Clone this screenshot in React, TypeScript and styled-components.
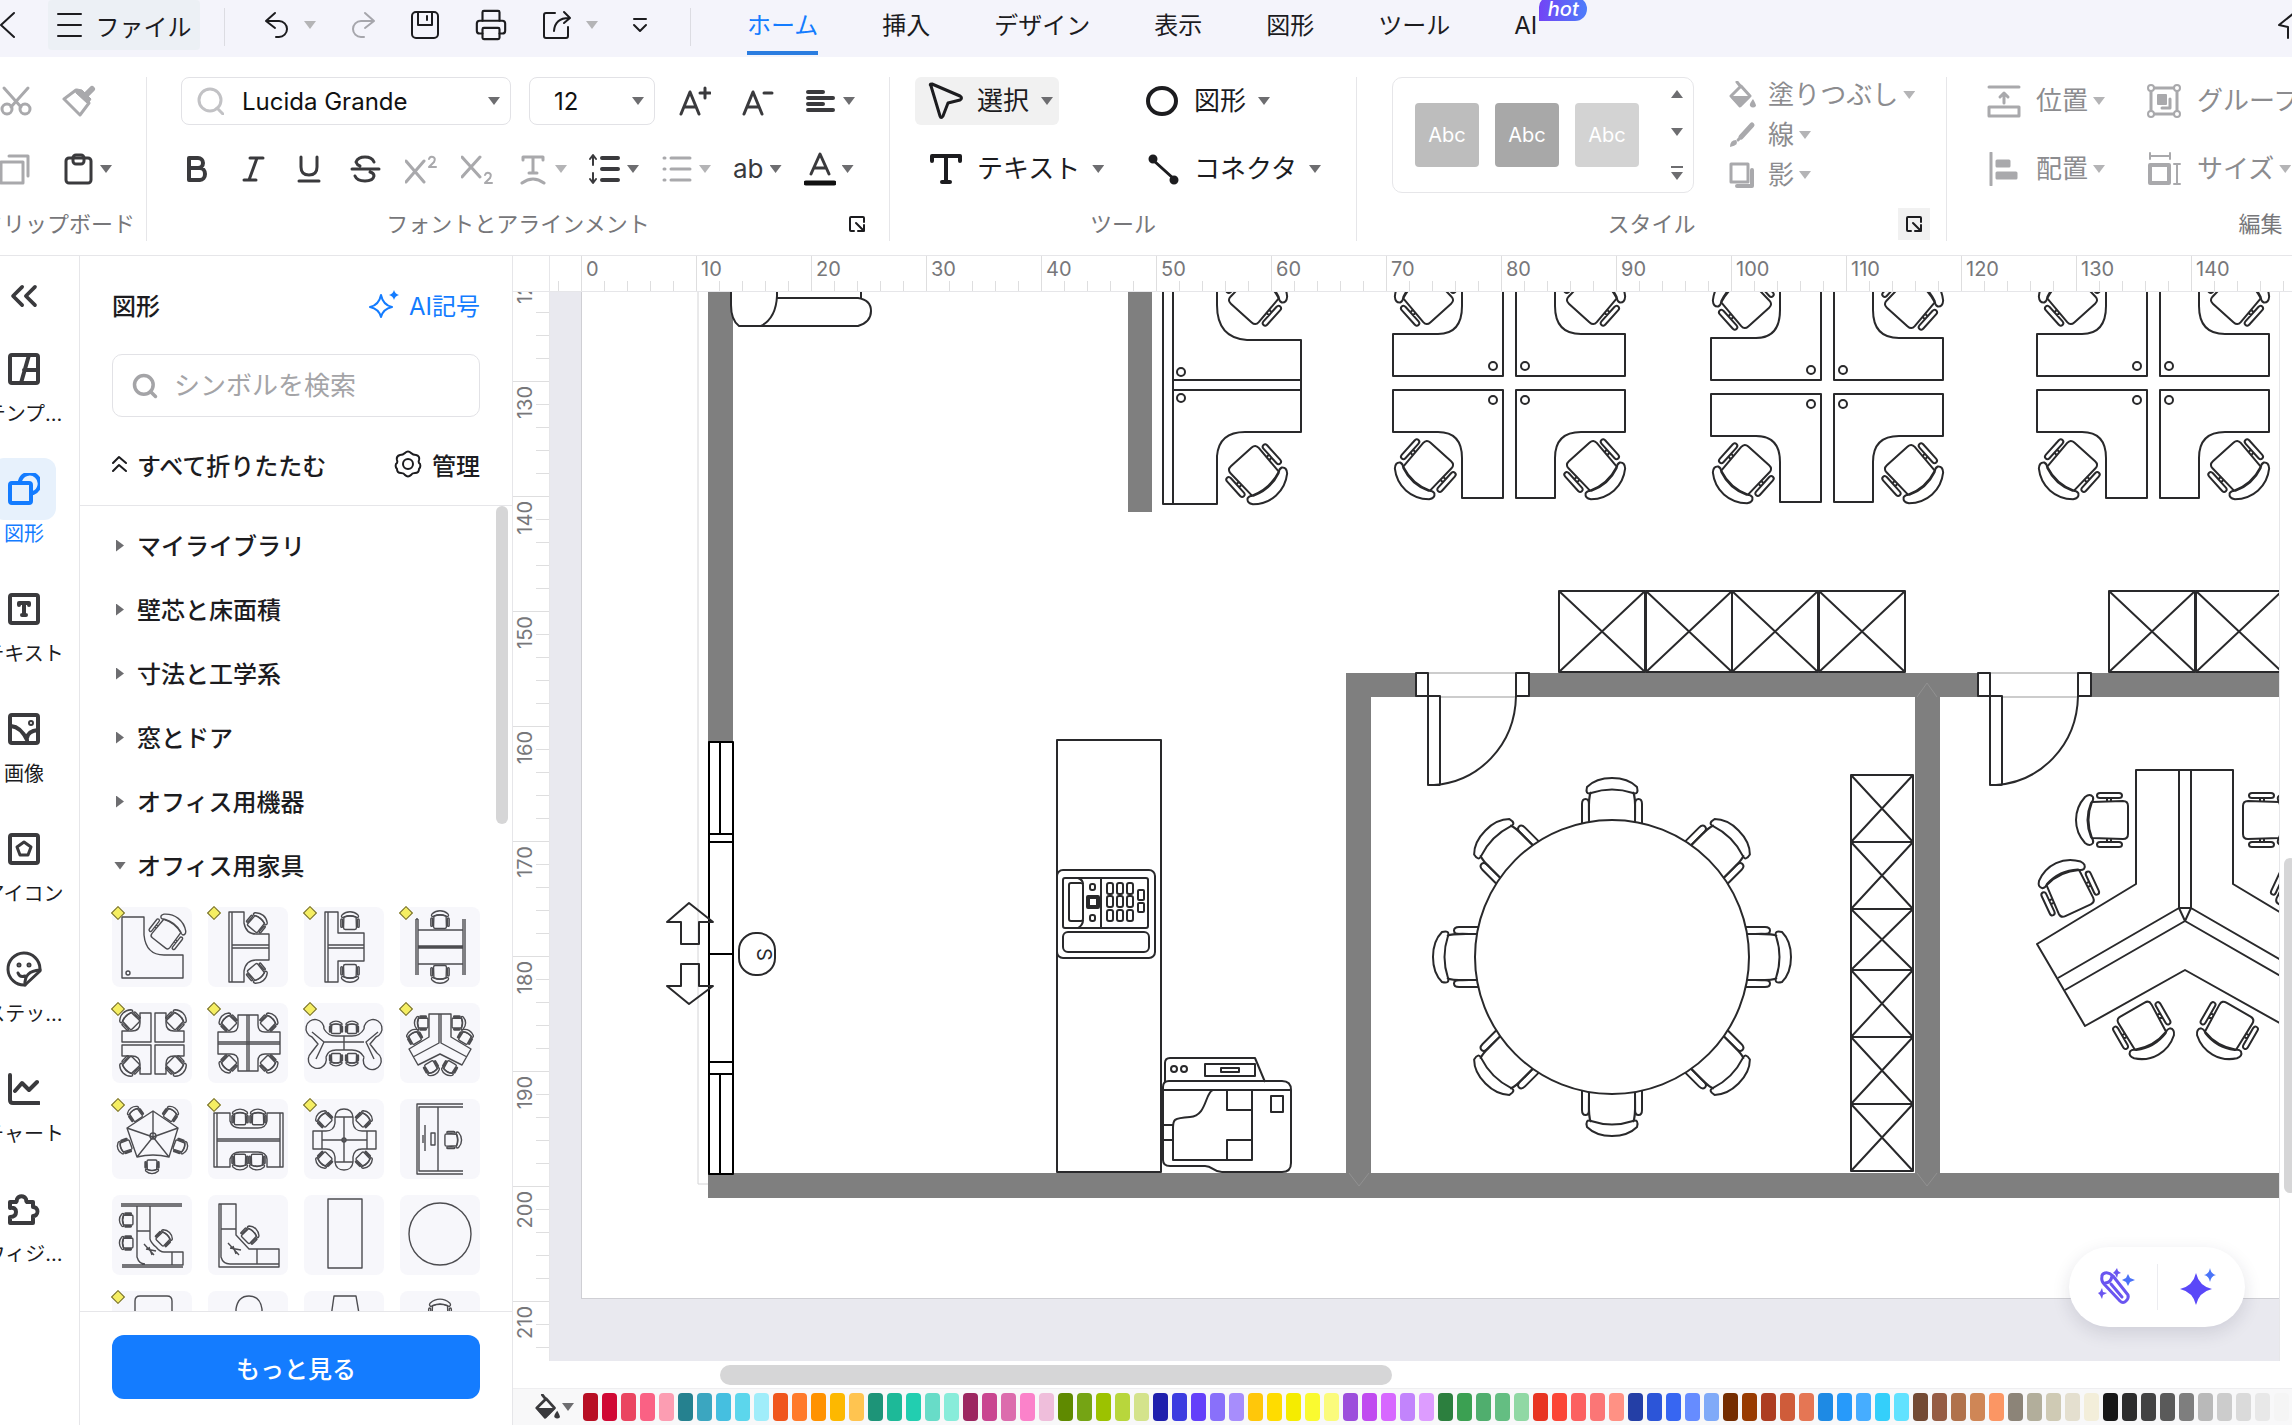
import React from 'react';
import styled, { createGlobalStyle, css } from 'styled-components';
import { Printer, Search, ChevronsLeft } from 'lucide-react';

const GlobalStyle = createGlobalStyle`
  *, *::before, *::after { box-sizing: border-box; }
  html, body { margin: 0; overflow: hidden; }
  body, button, input, select {
    font-family: Inter, "Noto Sans CJK JP", sans-serif;
    font-size: 24px;
    color: #1c1c1f;
  }
  button { border: 0; padding: 0; background: none; cursor: pointer; }
  svg { display: block; flex: none; }
`;

const line = '#e6e6e9';
const blue = '#147cff';
const dark = '#3a3a3d';
const muted = '#a9a9ac';

/* ---------- shell ---------- */

const Shell = styled.div`
  display: flex;
  flex-direction: column;
  height: 100vh;
  overflow: hidden;
  background: #fff;
`;

const Main = styled.main`
  display: flex;
  flex: 1;
  min-height: 0;
`;

const Caret = styled.span<{ $dim?: boolean; $dir?: 'up' | 'down' | 'right' }>`
  flex: none;
  width: 12px;
  height: 8px;
  background: ${p => (p.$dim ? '#b4b4b6' : '#6d6d70')};
  clip-path: polygon(0 0, 100% 0, 50% 100%);
  ${p => p.$dir === 'up' && css`clip-path: polygon(50% 0, 100% 100%, 0 100%);`}
  ${p => p.$dir === 'right' && css`width: 8px; height: 12px; clip-path: polygon(0 0, 100% 50%, 0 100%);`}
`;

type IconProps = { w?: number; h?: number; vb?: string; sw?: number; color?: string; children: React.ReactNode };
const Icon = ({ w = 32, h = 32, vb, sw = 3, color = 'currentColor', children }: IconProps) => (
  <svg width={w} height={h} viewBox={vb || `0 0 ${w} ${h}`} fill="none" stroke={color} strokeWidth={sw}
    strokeLinecap="round" strokeLinejoin="round" aria-hidden="true">{children}</svg>
);

/* ---------- title bar ---------- */

const TitleBar = styled.header`
  display: flex;
  align-items: flex-start;
  flex: none;
  height: 57px;
  background: #f4f4fb;
  overflow: hidden;
`;

const BarButton = styled.button<{ $dim?: boolean }>`
  display: flex;
  align-items: center;
  justify-content: center;
  gap: 14px;
  height: 50px;
  color: ${p => (p.$dim ? '#a6a6ac' : '#1c1c1f')};
`;

const BackButton = styled(BarButton)`
  width: 16px;
  margin-right: 32px;
`;

const FileButton = styled(BarButton)`
  width: 152px;
  margin-right: 24px;
  border-radius: 4px;
  background: #ecf0f5;
`;

const Divider = styled.span`
  flex: none;
  width: 1px;
  height: 38px;
  margin: 8px 0;
  background: #dcdce2;
`;

const QuickTools = styled.div`
  display: flex;
  gap: 34px;
  padding: 0 42px 0 39px;
`;

const Tabs = styled.nav`
  display: flex;
  gap: 64px;
  padding-left: 56px;
`;

const Tab = styled.a<{ $active?: boolean }>`
  position: relative;
  height: 55px;
  line-height: 51px;
  text-decoration: none;
  white-space: nowrap;
  color: ${p => (p.$active ? blue : '#1c1c1f')};
  border-bottom: 4px solid ${p => (p.$active ? '#2b7de0' : 'transparent')};
`;

const HotBadge = styled.span`
  position: absolute;
  left: 25px;
  top: -3px;
  width: 48px;
  height: 24px;
  line-height: 24px;
  text-align: center;
  font-size: 20px;
  font-style: italic;
  font-weight: 500;
  color: #fff;
  border-radius: 10px 12px 12px 0;
  background: linear-gradient(90deg, #7344f5, #4d7dfa);
`;

const ShareButton = styled(BarButton)`
  margin-left: auto;
  margin-right: -18px;
`;

/* ---------- ribbon ---------- */

const Ribbon = styled.section`
  display: flex;
  flex: none;
  height: 199px;
  padding-top: 20px;
  border-bottom: 1px solid ${line};
  overflow: hidden;
`;

const Group = styled.div<{ $width: number }>`
  flex: none;
  display: grid;
  grid-template-columns: minmax(0, 1fr);
  grid-template-rows: 116px 32px;
  row-gap: 15px;
  width: ${p => p.$width}px;
  height: 164px;
  border-right: 1px solid ${line};
`;

const GroupBody = styled.div<{ $pad: number }>`
  display: flex;
  padding-left: ${p => p.$pad}px;
`;

const GroupFooter = styled.div`
  display: grid;
  grid-template-columns: 1fr auto 1fr;
  align-items: center;
  padding: 0 16px;
  font-size: 22px;
  line-height: 32px;
  white-space: nowrap;
  color: #77777a;
`;

const ClipFooter = styled(GroupFooter)`
  display: flex;
  justify-content: flex-end;
  padding: 0 11px;
`;

const Launcher = styled.button<{ $hover?: boolean }>`
  grid-column: 3;
  justify-self: end;
  display: grid;
  place-items: center;
  width: 32px;
  height: 32px;
  color: #1c1c1f;
  background: ${p => (p.$hover ? '#f1f1f1' : 'none')};
`;

const Rows = styled.div`
  display: grid;
  grid-template-rows: 48px 48px;
  row-gap: 20px;
`;

const Row = styled.div<{ $gap: number }>`
  display: flex;
  align-items: center;
  gap: ${p => p.$gap}px;
`;

const ToolButton = styled.button<{ $dim?: boolean; $gap?: number }>`
  display: flex;
  align-items: center;
  gap: ${p => p.$gap ?? 6}px;
  font-size: 26px;
  line-height: 36px;
  white-space: nowrap;
  color: ${p => (p.$dim ? muted : dark)};
`;

const Field = styled.label<{ $width: number }>`
  display: flex;
  align-items: center;
  width: ${p => p.$width}px;
  height: 48px;
  padding: 0 10px 0 14px;
  border: 1px solid #e2e2e6;
  border-radius: 8px;
  color: #c2c2c5;
`;

const Select = styled.select`
  flex: 1;
  min-width: 0;
  padding: 0 0 0 18px;
  border: 0;
  outline: 0;
  background: none;
  appearance: none;
  color: #111;
`;

const SizeSelect = styled(Select)`
  padding-left: 10px;
`;

const ToolGrid = styled.div`
  display: grid;
  grid-template-columns: 217px auto;
  grid-template-rows: 48px 48px;
  row-gap: 20px;
  justify-items: start;
`;

const BigTool = styled(ToolButton)<{ $active?: boolean }>`
  gap: 12px;
  height: 48px;
  padding: 0 6px 0 12px;
  border-radius: 6px;
  color: #1c1c1f;
  background: ${p => (p.$active ? '#f1f1f1' : 'none')};
`;

const Gallery = styled.div`
  display: flex;
  align-items: center;
  justify-content: space-between;
  width: 302px;
  height: 116px;
  padding: 0 10px 0 22px;
  border: 1px solid ${line};
  border-radius: 10px;
`;

const Swatches = styled.div`
  display: flex;
  gap: 16px;
`;

const StyleSwatch = styled.button<{ $fill: string }>`
  width: 64px;
  height: 64px;
  border-radius: 4px;
  font-size: 20px;
  color: #fff;
  background: ${p => p.$fill};
`;

const Steppers = styled.div`
  display: flex;
  flex-direction: column;
  justify-content: space-between;
  height: 90px;
  button { display: grid; justify-items: center; row-gap: 4px; }
`;

const Rule = styled.span`
  width: 12px;
  height: 2px;
  background: #6d6d70;
`;

const StyleList = styled.div`
  display: flex;
  flex-direction: column;
  justify-content: space-between;
  margin-left: 34px;
`;

const StyleItem = styled(ToolButton)`
  gap: 5px;
  color: #8c8c8f;
  svg { margin-right: 7px; color: ${muted}; }
`;

const EditGrid = styled.div`
  display: grid;
  grid-template-columns: 159px auto;
  grid-template-rows: 48px 48px;
  row-gap: 20px;
`;

const EditItem = styled(StyleItem)`
  svg { margin-right: 10px; }
`;

/* ---------- left rail ---------- */

const Rail = styled.nav`
  flex: none;
  width: 80px;
  border-right: 1px solid ${line};
  overflow: hidden;
`;

const RailInner = styled.div`
  display: flex;
  flex-direction: column;
  align-items: center;
  gap: 30px;
  width: 112px;
  margin-left: -32px;
  padding-top: 16px;
`;

const CollapseButton = styled.button`
  display: grid;
  place-items: center;
  height: 48px;
  margin-bottom: -12px;
  color: ${dark};
`;

const RailItem = styled.button<{ $active?: boolean }>`
  display: flex;
  flex-direction: column;
  align-items: center;
  width: 112px;
  font-size: 20px;
  line-height: 28px;
  white-space: nowrap;
  color: ${p => (p.$active ? blue : '#1c1c1f')};
`;

const RailIcon = styled.span<{ $active?: boolean }>`
  display: grid;
  place-items: center;
  width: 64px;
  height: 62px;
  border-radius: 12px;
  color: ${p => (p.$active ? blue : dark)};
  background: ${p => (p.$active ? '#e7f1fc' : 'none')};
`;

/* ---------- symbol panel ---------- */

const Panel = styled.aside`
  display: flex;
  flex-direction: column;
  flex: none;
  width: 433px;
  border-right: 1px solid ${line};
`;

const PanelTop = styled.div`
  padding: 24px 32px 17px;
  border-bottom: 1px solid ${line};
`;

const PanelRow = styled.div`
  display: flex;
  align-items: center;
  justify-content: space-between;
  height: 48px;
`;

const Heading = styled.h2`
  margin: 0;
  font-size: 24px;
  font-weight: 500;
`;

const PanelLink = styled.button<{ $blue?: boolean }>`
  display: flex;
  align-items: center;
  gap: 10px;
  font-weight: ${p => (p.$blue ? 400 : 500)};
  color: ${p => (p.$blue ? blue : '#1c1c1f')};
`;

const SearchBox = styled.label`
  display: flex;
  align-items: center;
  gap: 15px;
  height: 63px;
  margin: 26px 0 23px;
  padding: 0 18px;
  border: 1px solid #e2e2e6;
  border-radius: 10px;
  color: #a4a4a7;
`;

const SearchInput = styled.input`
  flex: 1;
  min-width: 0;
  border: 0;
  outline: 0;
  padding: 0;
  background: none;
  font-size: 26px;
  &::placeholder { color: #a4a4a7; opacity: 1; }
`;

const Scroller = styled.div`
  display: flex;
  flex: 1;
  min-height: 0;
`;

const Library = styled.div`
  flex: 1;
  padding: 6px 0 0 32px;
  overflow: hidden;
`;

const SectionButton = styled.button`
  display: flex;
  align-items: center;
  width: 100%;
  height: 64px;
  font-weight: 500;
`;

const Marker = styled.span`
  display: grid;
  justify-items: center;
  width: 16px;
  margin-right: 9px;
  padding-top: 3px;
`;

const Track = styled.div`
  flex: none;
  width: 16px;
`;

const Thumb = styled.div<{ $w: string; $h: number; $x?: number; $y?: number }>`
  width: ${p => p.$w};
  height: ${p => p.$h}px;
  margin: ${p => p.$y ?? 0}px 0 0 ${p => p.$x ?? 0}px;
  border-radius: 10px;
  background: #d6d6d7;
`;

const Tiles = styled.div`
  display: grid;
  grid-template-columns: repeat(4, 80px);
  grid-auto-rows: 80px;
  gap: 16px;
  padding-top: 11px;
`;

const Tile = styled.button`
  position: relative;
  width: 80px;
  height: 80px;
  border-radius: 8px;
  background: #f7f7fb;
`;

const Gem = styled.span`
  position: absolute;
  left: 1px;
  top: 1px;
  width: 10px;
  height: 10px;
  border: 1px solid #6b6433;
  background: #f5ee62;
  transform: rotate(45deg);
`;

const PanelFooter = styled.div`
  flex: none;
  height: 114px;
  padding: 23px 32px 0;
  border-top: 1px solid ${line};
`;

const MoreButton = styled.button`
  width: 100%;
  height: 64px;
  border-radius: 12px;
  font-weight: 500;
  color: #fff;
  background: ${blue};
`;

/* ---------- canvas ---------- */

const Workspace = styled.section`
  display: flex;
  flex-direction: column;
  flex: 1;
  min-width: 0;
`;

const RulerTop = styled.div`
  display: flex;
  flex: none;
  height: 36px;
  border-bottom: 1px solid ${line};
  overflow: hidden;
`;

const Corner = styled.div`
  flex: none;
  width: 37px;
  border-right: 1px solid ${line};
`;

const tick = '#dededf';

const LeadCell = styled.div`
  flex: none;
  width: 31px;
  background: repeating-linear-gradient(to left, transparent 0 22px, ${tick} 22px 23px) left bottom / 100% 10px no-repeat;
`;

const CellX = styled.div`
  flex: none;
  width: 115px;
  padding: 1px 0 0 4px;
  border-left: 1px solid ${tick};
  font-size: 20px;
  line-height: 24px;
  color: #77777a;
  background: repeating-linear-gradient(to right, transparent 0 22px, ${tick} 22px 23px) left bottom / 100% 10px no-repeat;
`;

const Body = styled.div`
  display: flex;
  flex: 1;
  min-height: 0;
`;

const RulerLeft = styled.div`
  flex: none;
  width: 37px;
  border-right: 1px solid ${line};
  overflow: hidden;
`;

const CellsY = styled.div`
  margin-top: -26px;
`;

const CellY = styled.div`
  height: 115px;
  padding-top: 4px;
  border-top: 1px solid ${tick};
  font-size: 20px;
  line-height: 24px;
  color: #77777a;
  background: repeating-linear-gradient(to bottom, transparent 0 22px, ${tick} 22px 23px) right top / 13px 100% no-repeat;
  span { display: block; width: 24px; writing-mode: vertical-rl; transform: rotate(180deg); }
`;

const Canvas = styled.div`
  position: relative;
  flex: 1;
  min-width: 0;
  padding-left: 31px;
  overflow: hidden;
  background: #e9e9ef;
`;

const Page = styled.div`
  height: 1007px;
  border-left: 1px solid #cfcfd4;
  border-bottom: 1px solid #cfcfd4;
  background: #fff;
  overflow: hidden;
`;

const Assist = styled.div`
  position: absolute;
  right: 34px;
  bottom: 34px;
  display: flex;
  align-items: center;
  justify-content: center;
  gap: 21px;
  width: 176px;
  height: 80px;
  border-radius: 40px;
  background: #fff;
  box-shadow: 0 6px 18px rgba(30, 30, 60, 0.13);
`;

const AssistRule = styled.span`
  width: 1px;
  height: 46px;
  background: #ececf0;
`;

const TrackY = styled.div`
  flex: none;
  width: 13px;
  overflow: hidden;
  border-left: 1px solid ${line};
`;

const TrackX = styled.div`
  flex: none;
  height: 28px;
  border-bottom: 1px solid #eeeef0;
`;

const Palette = styled.div`
  display: flex;
  align-items: center;
  flex: none;
  height: 36px;
  padding-left: 21px;
  background: #f8f8f9;
  overflow: hidden;
`;

const PaletteFill = styled.button`
  display: flex;
  align-items: center;
  gap: 2px;
  flex: none;
  width: 49px;
  color: ${dark};
`;

const Colors = styled.div`
  display: flex;
  gap: 4px;
`;

const Color = styled.button<{ $c: string }>`
  flex: none;
  width: 15px;
  height: 28px;
  border-radius: 4px;
  background: ${p => p.$c};
`;

/* ---------- drawings ---------- */

const Chair = ({ x, y, r, s = 1, fill = '#fff' }: { x: number; y: number; r: number; s?: number; fill?: string }) => (
  <g transform={`translate(${x} ${y}) rotate(${r}) scale(${s})`} fill={fill}>
    <path vectorEffect="non-scaling-stroke" d="M-14 -19H14Q19 -19 19 -14L18 17Q0 24 -18 17L-19 -14Q-19 -19 -14 -19Z" />
    <path vectorEffect="non-scaling-stroke" d="M-23 16Q-27 19 -23 24Q-13 33 0 33Q13 33 23 24Q27 19 23 16Q20 15 17 18Q0 25 -17 18Q-20 15 -23 16Z" />
    <path vectorEffect="non-scaling-stroke" d="M-27 -10Q-27 -13 -24.500 -13T-22 -10V9Q-22 12 -24.500 12T-27 9ZM22 -10Q22 -13 24.500 -13T27 -10V9Q27 12 24.500 12T22 9ZM-22 -2H-19M-22 2H-19M22 -2H19M22 2H19" />
  </g>
);

const SeatAtTable = ({ r }: { r: number }) => (
  <g transform={`translate(1612 957) rotate(${r})`}>
    <path d="M-21 -165C-24 -160 -23 -152 -23 -130H23C23 -152 24 -160 21 -165" />
    <path d="M-30 -130V-153Q-30 -158 -26.500 -158T-23 -153V-130M30 -130V-153Q30 -158 26.500 -158T23 -153V-130" />
    <path d="M-21 -164Q-27 -162 -25 -170Q-16 -179 0 -179Q16 -179 25 -170Q27 -162 21 -164Q0 -171 -21 -164Z" />
  </g>
);

const Cluster = ({ dx, dy }: { dx: number; dy: number }) => (
  <g transform={`translate(${dx} ${dy})`}>
    <path d="M1503 280V376H1393V334H1438Q1462 334 1462 306V280M1516 280V376H1625V334H1581Q1555 334 1555 306V280" />
    <path d="M1393 390H1503V498H1462V458Q1462 432 1438 432H1393ZM1625 390H1516V498H1555V458Q1555 432 1581 432H1625Z" />
    <circle cx="1493" cy="400" r="4" /><circle cx="1525" cy="400" r="4" />
    <circle cx="1493" cy="366" r="4" /><circle cx="1525" cy="366" r="4" />
    <Chair x={1428} y={466} r={42} /><Chair x={1592} y={466} r={-42} />
    <Chair x={1428} y={299} r={138} /><Chair x={1592} y={299} r={-138} />
  </g>
);

const Cabinet = ({ x, y, w, h }: { x: number; y: number; w: number; h: number }) => (
  <path d={`M${x} ${y}h${w}v${h}h${-w}zl${w} ${h}M${x + w} ${y}l${-w} ${h}`} />
);

const Door = ({ x }: { x: number }) => (
  <g transform={`translate(${x} 0)`}>
    <rect x="1428" y="673" width="88" height="24" stroke="#999" strokeWidth="1" />
    <rect x="1416" y="673" width="12" height="23" /><rect x="1516" y="673" width="13" height="23" />
    <path d="M1428 696H1440V785H1428ZM1516 696C1515 746 1478 782 1434 785" />
  </g>
);

const keys = [883, 896, 910].flatMap(y => [1107, 1117, 1127].map(x => [x, y]));

const FloorPlan = () => (
  <svg width="100%" height="1006" role="img" aria-label="オフィスのフロアプラン">
    <g transform="translate(-582 -292)" fill="none" stroke="#29292b" strokeWidth="2" strokeLinejoin="round">
      <path d="M698 280V1184H710" stroke="#d4d4d6" strokeWidth="1" />
      <g fill="#7f7f7f" stroke="none">
        <path d="M708 280H733V742H708ZM1128 280H1152V512H1128ZM708 1173H2400V1198H708ZM1346 673H1371V1173H1346ZM1346 673H2400V697H1346ZM1915 690H1940V1173H1915Z" />
      </g>
      <path d="M1917 697L1927 683L1937 697M1349 1173L1359 1186L1369 1173M1917 1173L1927 1186L1937 1173" stroke="#919191" strokeWidth="1" />
      <g fill="#fff" stroke="#000">
        <rect x="709" y="742" width="24" height="92" /><rect x="709" y="834" width="24" height="8" />
        <rect x="709" y="842" width="24" height="220" /><rect x="709" y="1062" width="24" height="12" />
        <rect x="709" y="1074" width="24" height="100" />
        <path d="M720 742V834M720 1074V1174M709 954H733" />
      </g>
      <path d="M689 903L713 922H699V944H681V922H667ZM689 1004L713 986H699V964H681V986H667Z" />
      <rect x="739" y="933" width="36" height="42" rx="17" fill="#fff" />
      <text transform="translate(757 948) rotate(90)" fontFamily="Inter, sans-serif" fontSize="20" fill="#29292b" stroke="none">S</text>
      <path d="M731 280V305Q731 320 739 326H761Q776 318 777 296V280M777 298H858Q871 300 871 311T858 326H739M861 280V298" fill="#fff" />
      <path d="M1163 280V504H1217V456Q1219 432 1245 432H1301V340H1247Q1217 338 1217 305V280M1173 280V504M1173 380H1301M1173 390H1301" />
      <circle cx="1181" cy="372" r="4" /><circle cx="1181" cy="398" r="4" />
      <Chair x={1254} y={471} r={-42} /><Chair x={1254} y={299} r={-138} />
      <Cluster dx={0} dy={0} /><Cluster dx={318} dy={4} /><Cluster dx={644} dy={0} />
      {[1559, 1646, 1732, 1819, 2109, 2196].map(x => <Cabinet key={x} x={x} y={591} w={86} h={81} />)}
      <g fill="#fff"><Door x={0} /><Door x={562} /></g>
      {[[775, 67], [842, 67], [909, 61], [970, 67], [1037, 67], [1104, 67]].map(([y, h]) => (
        <Cabinet key={y} x={1851} y={y} w={62} h={h} />
      ))}
      <rect x="1057" y="740" width="104" height="432" fill="#fff" />
      <g fill="#fff">
        <rect x="1057" y="870" width="98" height="88" rx="6" /><rect x="1063" y="878" width="85" height="50" rx="2" />
        <rect x="1063" y="932" width="86" height="20" rx="5" /><rect x="1069" y="883" width="14" height="38" rx="2" />
        <path d="M1078 878Q1083 880 1083 884M1078 928Q1083 925 1083 920M1101 878V928" />
        <rect x="1088" y="897" width="10" height="10" strokeWidth="4" />
        <rect x="1090" y="884" width="5" height="6" rx="2" /><rect x="1090" y="915" width="5" height="6" rx="2" />
        {keys.map(([x, y]) => <rect key={`${x}-${y}`} x={x} y={y} width="6" height="11" rx="2" />)}
        <rect x="1138" y="890" width="6" height="10" rx="1" /><rect x="1138" y="903" width="6" height="9" rx="1" />
      </g>
      <g>
        <path d="M1165 1082V1063Q1165 1058 1170 1058H1255L1265 1082" />
        <path d="M1169 1081H1282Q1291 1081 1291 1090V1163Q1291 1172 1282 1172H1222C1213 1172 1213 1166 1205 1166H1170Q1163 1166 1163 1160V1087Q1163 1081 1169 1081ZM1163 1090H1291" />
        <path d="M1213 1090C1205 1092 1207 1116 1190 1117S1173 1120 1173 1128V1160H1252V1090M1227 1090V1110H1252M1227 1160V1140H1252M1163 1125H1173M1163 1140H1173" />
        <rect x="1271" y="1096" width="12" height="16" /><circle cx="1174" cy="1069" r="3" /><circle cx="1184" cy="1069" r="3" />
        <rect x="1205" y="1064" width="50" height="12" /><rect x="1221" y="1068" width="18" height="4" />
      </g>
      {[0, 45, 90, 135, 180, 225, 270, 315].map(r => <SeatAtTable key={r} r={r} />)}
      <circle cx="1612" cy="957" r="137" fill="#fff" />
      <path d="M2136 770H2233V884L2333 944L2285 1026L2185 970L2085 1026L2037 944L2136 884Z" />
      <path d="M2179 770V908L2058 978M2191 770V908L2312 978M2185 921L2065 990M2185 921L2305 990M2179 908H2191L2185 921Z" />
      <Chair x={2109} y={820} r={90} /><Chair x={2262} y={820} r={-90} />
      <Chair x={2070} y={893} r={155} /><Chair x={2300} y={893} r={-155} />
      <Chair x={2142} y={1026} r={-30} /><Chair x={2229} y={1026} r={30} />
    </g>
  </svg>
);

const C = (x: number, y: number, r: number, s = 0.34) => <Chair key={`${x}-${y}`} x={x} y={y} r={r} s={s} fill="none" />;

const tiles: { name: string; gem?: boolean; art: React.ReactNode }[] = [
  { name: 'L字デスク', gem: true, art: <><path d="M10 10H32V28Q34 48 52 48H71V71H10Z" /><circle cx="16" cy="66" r="2" />{C(54, 27, -142, 0.6)}</> },
  { name: '2人用デスク', gem: true, art: <><path d="M21 5H36V16Q38 27 48 27H61V53H48Q38 53 36 64V75H21ZM24 5V75M24 38H61M24 41H61" />{C(48, 17, -140)}{C(48, 65, -40)}</> },
  { name: '2人用デスク', gem: true, art: <><path d="M21 5H34V26H60V54H34V75H21ZM24 5V75M24 38H60M24 41H60" />{C(46, 16, 180)}{C(46, 64, 0)}</> },
  { name: '対面デスク', gem: true, art: <><path d="M16 12V68M18 12V68M16 12H18M63 12V68M65 12V68M18 23H63V57H18ZM18 39H63M18 41H63M18 40H63" />{C(40, 15, 180)}{C(40, 65, 0)}</> },
  { name: '4人用デスク', gem: true, art: <><path d="M39 10H28V20Q28 28 20 28H10V39H39ZM43 10H54V20Q54 28 62 28H72V39H43ZM39 71H28V61Q28 53 20 53H10V42H39ZM43 71H54V61Q54 53 62 53H72V42H43Z" />{C(19, 18, 135)}{C(63, 18, -135)}{C(19, 62, 45)}{C(63, 62, -45)}</> },
  { name: '十字デスク', gem: true, art: <><path d="M30 12H50V22Q50 29 57 29H72V51H57Q50 51 50 58V68H30V58Q30 51 23 51H10V29H23Q30 29 30 22ZM39 12V68M41 12V68M10 39H72M10 41H72" />{C(21, 20, 135, 0.3)}{C(60, 20, -135, 0.3)}{C(21, 60, 45, 0.3)}{C(60, 60, -45, 0.3)}</> },
  { name: '6人用デスク', gem: true, art: <><path d="M20 39H60M40 33V47M8 29L20 39L12 56M74 29L62 39L70 56M20 26Q24 33 32 33H48Q56 33 60 26M22 54Q24 47 32 47H48Q56 47 60 54M20 26A9 9 0 1 0 8 34L14 41L7 50A9 9 0 1 0 22 54M60 26A9 9 0 1 1 72 34L66 41L73 50A9 9 0 1 1 60 54" />{C(32, 26, 180, 0.24)}{C(48, 26, 180, 0.24)}{C(32, 55, 0, 0.24)}{C(48, 55, 0, 0.24)}</> },
  { name: 'Y字デスク', gem: true, art: <><path d="M29 11H51V34L71 46L62 62L40 51L18 62L9 46L29 34ZM39 11V40L13 54M41 11V40L67 54" />{C(23, 20, 90, 0.26)}{C(57, 20, -90, 0.26)}{C(15, 35, 150, 0.26)}{C(65, 35, -150, 0.26)}{C(31, 64, -30, 0.26)}{C(50, 64, 30, 0.26)}</> },
  { name: '5人用デスク', gem: true, art: <><path d="M41 12L66 29L57 58Q41 54 25 58L15 29ZM41 12V37M66 29L41 38M57 58L41 38L25 58M15 29L41 38" /><circle cx="41" cy="37" r="3" />{C(24, 16, 145, 0.26)}{C(58, 16, -145, 0.26)}{C(14, 47, 70, 0.26)}{C(67, 47, -70, 0.26)}{C(40, 66, 0, 0.26)}</> },
  { name: '4人用H字デスク', gem: true, art: <><path d="M6 14H22V22Q24 29 32 29H50Q58 29 59 22V14H75V68H59V60Q58 53 50 53H32Q24 53 22 60V68H6ZM9 14V68M72 14V68M9 40H72M9 42H72" />{C(32, 20, 180, 0.3)}{C(50, 20, 180, 0.3)}{C(32, 61, 0, 0.3)}{C(49, 61, 0, 0.3)}</> },
  { name: '丸端十字デスク', gem: true, art: <><path d="M31 18Q32 10 40 10T49 18V24Q50 32 58 32H72V50H58Q50 50 49 58V63Q48 71 40 71T31 63V58Q30 50 22 50H9V32H22Q30 32 31 24ZM31 18H49M31 63H49M18 32V50M63 32V50M40 18V63M18 41H63" /><circle cx="40" cy="41" r="2" />{C(21, 21, 135, 0.28)}{C(59, 21, -135, 0.28)}{C(21, 60, 45, 0.28)}{C(59, 60, -45, 0.28)}</> },
  { name: 'ブース', art: <><path d="M63 5H17V75H63M63 8H19V72H63M38 8V72M25 26V52" /><rect x="31" y="34" width="4" height="12" /><path d="M23 36V44" />{C(51, 41, -90, 0.32)}</> },
  { name: '受付デスク', art: <><path d="M9 9H70M9 11H70M10 70H71V57H52Q48 57 44 52Q39 48 38 44V11H25V62Q27 69 33 69M25 36H38M10 72H71M60 57V70M32 49L42 60M34 54L44 56M37 52L40 60" />{C(16, 25, 90, 0.26)}{C(16, 48, 90, 0.26)}{C(51, 44, -135, 0.28)}</> },
  { name: 'コーナーデスク', art: <><path d="M11 9H28V40L41 54H71V72H11ZM13 9V62Q15 69 22 69H71M13 34H28M49 54V69M20 48L31 60M22 53L33 55M25 51L28 59" />{C(41, 41, -135, 0.3)}</> },
  { name: '長方形テーブル', art: <rect x="24" y="4" width="34" height="69" /> },
  { name: '円形テーブル', art: <circle cx="40" cy="39" r="31" /> },
  { name: '角丸テーブル', gem: true, art: <path d="M23 40V10Q23 5 28 5H55Q60 5 60 10V40" /> },
  { name: '楕円テーブル', art: <path d="M28 40V18Q30 5 41 5T54 18V40" /> },
  { name: '台形テーブル', art: <path d="M25 40L30 5H52L58 40" /> },
  { name: '椅子', art: <>{C(40, 22, 180, 0.42)}</> },
];

const diag = (
  <Icon w={18} h={18} sw={2}><path d="M6 16H3Q2 16 2 15V3Q2 2 3 2H15Q16 2 16 3V7M8 8L15 15M16 10V16H10" /></Icon>
);

const Bucket = ({ size = 28 }: { size?: number }) => (
  <Icon w={size} h={size} vb="0 0 28 28" sw={3}>
    <path d="M9 1L13 6M13 5L3 15L12 25L22 15Z" /><path d="M4 16H21L12 25Z" fill="currentColor" strokeWidth="2" />
    <path d="M25 18Q21 23 22 25Q25 28 28 25Q28 23 25 18Z" fill="currentColor" stroke="none" />
  </Icon>
);

const sections = ['マイライブラリ', '壁芯と床面積', '寸法と工学系', '窓とドア', 'オフィス用機器', 'オフィス用家具'];

const railItems = [
  { label: 'テンプ…', icon: <><rect x="2" y="2" width="28" height="28" rx="2" /><path d="M21 2L13 30M16 17H30" /></> },
  { label: '図形', active: true, icon: <><rect x="2" y="10" width="21" height="20" rx="2" /><path d="M12 8A10 10 0 1 1 25 20" /></> },
  { label: 'テキスト', icon: <><rect x="2" y="2" width="28" height="28" rx="2" /><path d="M11 12V10H21V12M16 10V22M14 22H18" /></> },
  { label: '画像', icon: <><rect x="2" y="2" width="28" height="28" rx="2" /><path d="M3 13Q13 14 19 27M30 17Q20 18 19 25" /><circle cx="23" cy="10" r="1" /></> },
  { label: 'アイコン', icon: <><rect x="2" y="2" width="28" height="28" rx="2" /><path d="M16 9L23 14L20 22H12L9 14Z" strokeWidth="3" /></> },
  { label: 'ステッ…', big: true, icon: <g strokeWidth="3"><path d="M34 18A16 16 0 1 0 19 34L34 20Z" /><path d="M19 34Q18 20 34 19M12 22Q14 27 19 25" /><circle cx="13" cy="14" r="1" /><circle cx="23" cy="14" r="1" /></g> },
  { label: 'チャート', icon: <path d="M2 2V27Q2 30 5 30H31M7 18L14 10L21 17L29 9" /> },
  { label: 'ウィジ…', icon: <path d="M2 9H8Q9 8 9 6A5 5 0 0 1 18 6Q18 8 19 9H25V14Q27 14 28 15A5 5 0 0 1 28 22Q27 23 25 23V30H2V24Q8 24 8 19T2 15Z" /> },
];

const paletteColors = [
  'b80f24', 'd00834', 'ea4560', 'fa6184', 'fc9db2', '25818f', '3ba6c0', '45bfe0', '5cd6ec', 'a0edfa',
  'f0561d', 'ff7a2a', 'ff9200', 'fdb800', 'ffc450', '1d9478', '1db998', '22ceb0', '68dcc8', '88ecda',
  '9c2660', 'c94590', 'dc6cad', 'fb82ca', 'efbedb', '5f8a00', '75a414', '9cc200', 'b8d63c', 'd4e38c',
  '1f1fad', '3c3ce0', '6440fa', '8970fa', 'a78dfc', 'ffc70a', 'ffdc00', 'f5ec00', 'fafa30', 'fbfb7c',
  '9c4edc', 'c04bf0', 'd768ff', 'c284fc', 'dd9cff', '2c7f3e', '3ba052', '50ae6e', '64be82', '90d8a4',
  'e83422', 'fb4536', 'fc6060', 'fb7676', 'ff9184', '243fa6', '2c55d8', '3766f2', '668cff', '80aaf8',
  '742c00', '983a00', 'ad3d22', 'cf5c3a', 'e57654', '1e8ae4', '279afa', '46adff', '34cffa', '62e2ff',
  '734a34', '955c44', 'b0724c', 'cf8656', 'fb9664', '8c8478', 'b2ae9b', 'cfcab4', 'e4dfcf', 'f3eeda',
  '171717', '2c2c2c', '434343', '5a5a5a', '7e7e7e', 'b9b9b9', 'cccccc', 'dadada', 'e8e8e8', 'f5f5f5',
];

/* ---------- app ---------- */

const Header = () => (
  <TitleBar>
    <BackButton aria-label="戻る"><Icon w={16} h={30} sw={2}><path d="M14 3L1 15L14 27" /></Icon></BackButton>
    <FileButton><Icon w={25} h={26} sw={2}><path d="M1 2H24M1 13H24M1 24H24" /></Icon>ファイル</FileButton>
    <Divider />
    <QuickTools>
      <BarButton aria-label="元に戻す"><Icon w={26} h={30} sw={2}><path d="M11 3L2 11L11 18M2 11H15A8 8 0 0 1 15 27H12" /></Icon><Caret $dim /></BarButton>
      <BarButton aria-label="やり直し" $dim><Icon w={26} h={30} sw={2}><path d="M15 3L24 11L15 18M24 11H11A8 8 0 0 0 11 27H14" /></Icon></BarButton>
      <BarButton aria-label="保存"><Icon w={30} h={30} sw={2}><rect x="2" y="2" width="26" height="26" rx="4" /><path d="M8 2V15H22V2M17 6V10" /></Icon></BarButton>
      <BarButton aria-label="印刷"><Printer size={34} strokeWidth={1.5} /></BarButton>
      <BarButton aria-label="エクスポート"><Icon w={30} h={30} sw={2}><path d="M13 3H4Q2 3 2 5V26Q2 28 4 28H24Q26 28 26 26V17M12 21Q13 8 27 8M22 2L28 8L22 13" /></Icon><Caret $dim /></BarButton>
      <BarButton aria-label="カスタマイズ"><Icon w={16} h={18} sw={2}><path d="M2 3H14M2 9L8 15L14 9" /></Icon></BarButton>
    </QuickTools>
    <Divider />
    <Tabs>
      <Tab href="#home" $active>ホーム</Tab>
      <Tab href="#insert">挿入</Tab>
      <Tab href="#design">デザイン</Tab>
      <Tab href="#view">表示</Tab>
      <Tab href="#shapes">図形</Tab>
      <Tab href="#tools">ツール</Tab>
      <Tab href="#ai">AI<HotBadge>hot</HotBadge></Tab>
    </Tabs>
    <ShareButton aria-label="共有"><Icon w={32} h={30} sw={2}><path d="M10 28V17L1 15L16 3L31 15" /></Icon></ShareButton>
  </TitleBar>
);

const RibbonBar = () => (
  <Ribbon>
    <Group $width={147}>
      <GroupBody $pad={0}>
        <Rows>
          <Row $gap={30}>
            <ToolButton $dim aria-label="切り取り"><Icon><path d="M4 3L21 22M28 3L11 22" /><circle cx="7" cy="24" r="5" /><circle cx="25" cy="24" r="5" /></Icon></ToolButton>
            <ToolButton $dim aria-label="書式のコピー"><Icon w={34} h={32}><path d="M14 5L2 14L18 30L27 18Z" /><path d="M15 4L20 5L29 14L26 19L14 8Z" fill="currentColor" strokeWidth="1" /><path d="M25 9L30 4" strokeWidth="6" /></Icon></ToolButton>
          </Row>
          <Row $gap={30}>
            <ToolButton $dim aria-label="コピー"><Icon><rect x="1" y="9" width="22" height="21" /><path d="M9 3H28V23" /></Icon></ToolButton>
            <ToolButton aria-label="貼り付け"><Icon><rect x="4" y="5" width="25" height="25" rx="3" /><rect x="11" y="2" width="11" height="9" rx="3" /></Icon><Caret /></ToolButton>
          </Row>
        </Rows>
      </GroupBody>
      <ClipFooter>クリップボード</ClipFooter>
    </Group>

    <Group $width={743}>
      <GroupBody $pad={34}>
        <Rows>
          <Row $gap={24}>
            <Row $gap={18}>
              <Field $width={330}>
                <Icon w={28} h={28} sw={3}><circle cx="14" cy="13" r="11" /><path d="M21 21L27 27" /></Icon>
                <Select aria-label="フォント" defaultValue="Lucida Grande"><option>Lucida Grande</option></Select><Caret />
              </Field>
              <Field $width={126}>
                <SizeSelect aria-label="フォントサイズ" defaultValue="12"><option>12</option></SizeSelect><Caret />
              </Field>
            </Row>
            <Row $gap={31}>
              <ToolButton aria-label="文字を大きく"><Icon><path d="M2 29L11 7L20 29M5 22H17M26 3V13M21 8H31" /></Icon></ToolButton>
              <ToolButton aria-label="文字を小さく"><Icon><path d="M2 29L11 7L20 29M5 22H17M22 8H30" /></Icon></ToolButton>
              <ToolButton aria-label="文字揃え"><Icon sw={4}><path d="M3 7H18M3 13H28M3 19H18M3 25H28" /></Icon><Caret /></ToolButton>
            </Row>
          </Row>
          <Row $gap={24}>
            <ToolButton aria-label="太字"><Icon sw={4}><path d="M8 5H17A5 5 0 0 1 17 15H8ZM8 15H19A5 6 0 0 1 19 27H8Z" /></Icon></ToolButton>
            <ToolButton aria-label="斜体"><Icon><path d="M13 5H26M7 27H19M20 5L12 27" /></Icon></ToolButton>
            <ToolButton aria-label="下線"><Icon><path d="M8 4V14Q8 22 16 22T24 14V4M6 28H26" /></Icon></ToolButton>
            <ToolButton aria-label="取り消し線"><Icon><path d="M25 9Q23 4 16 4T7 9Q8 12 11 13M3 16H30M21 19Q25 20 25 23Q24 28 16 28T6 23" /></Icon></ToolButton>
            <ToolButton $dim aria-label="上付き"><Icon sw={2}><path d="M1 8L19 29M19 8L1 29" strokeWidth="3" /><path d="M24 6Q25 3 28 4T29 9L24 14H31" /></Icon></ToolButton>
            <ToolButton $dim aria-label="下付き"><Icon sw={2}><path d="M1 4L19 24M19 4L1 24" strokeWidth="3" /><path d="M24 22Q25 19 28 20T29 25L24 30H31" /></Icon></ToolButton>
            <Row $gap={22}>
              <ToolButton $dim aria-label="文字効果"><Icon><path d="M6 7V4H26V7M16 4V20M12 20H20M5 30Q16 22 27 30" /></Icon><Caret $dim /></ToolButton>
              <ToolButton aria-label="行間"><Icon><path d="M4 3V12M1 6L4 2L7 6M4 20V29M1 26L4 30L7 26" strokeWidth="2" /><path d="M13 5H29M13 16H29M13 27H29" strokeWidth="4" /></Icon><Caret /></ToolButton>
              <ToolButton $dim aria-label="箇条書き"><Icon><path d="M10 5H29M10 16H29M10 27H29M3 5H4M3 16H4M3 27H4" /></Icon><Caret $dim /></ToolButton>
              <ToolButton aria-label="文字種">ab<Caret /></ToolButton>
              <ToolButton aria-label="文字の色"><Icon h={36}><path d="M7 23L16 3L25 23M10 17H22" /><path d="M2 32H30" stroke="#111" strokeWidth="5" /></Icon><Caret /></ToolButton>
            </Row>
          </Row>
        </Rows>
      </GroupBody>
      <GroupFooter><span /><span>フォントとアラインメント</span><Launcher aria-label="フォントの詳細">{diag}</Launcher></GroupFooter>
    </Group>

    <Group $width={467}>
      <GroupBody $pad={25}>
        <ToolGrid>
          <BigTool $active><Icon w={38} h={38}><path d="M4 4Q2 2 5 2L33 14Q36 16 33 18L21 21L16 34Q14 37 13 34Z" /></Icon>選択<Caret /></BigTool>
          <BigTool><Icon w={38} h={32} sw={4}><ellipse cx="18" cy="16" rx="14" ry="13" /></Icon>図形<Caret /></BigTool>
          <BigTool><Icon w={38} h={34} sw={4}><path d="M5 9V4H33V9M19 4V30M15 30H23" /></Icon>テキスト<Caret /></BigTool>
          <BigTool><Icon w={38} h={34}><path d="M9 8L30 27" /><circle cx="9" cy="7" r="3" fill="currentColor" /><circle cx="30" cy="28" r="3" fill="currentColor" /></Icon>コネクタ<Caret /></BigTool>
        </ToolGrid>
      </GroupBody>
      <GroupFooter><span /><span>ツール</span></GroupFooter>
    </Group>

    <Group $width={590}>
      <GroupBody $pad={35}>
        <Gallery>
          <Swatches>
            <StyleSwatch $fill="#bdbdbd">Abc</StyleSwatch>
            <StyleSwatch $fill="#a8a8a8">Abc</StyleSwatch>
            <StyleSwatch $fill="#d3d3d3">Abc</StyleSwatch>
          </Swatches>
          <Steppers>
            <button aria-label="前へ"><Caret $dir="up" /></button>
            <button aria-label="次へ"><Caret /></button>
            <button aria-label="すべて表示"><Rule /><Caret /></button>
          </Steppers>
        </Gallery>
        <StyleList>
          <StyleItem><Bucket />塗りつぶし<Caret $dim /></StyleItem>
          <StyleItem><Icon w={28} h={28}><path d="M24 4L13 16" strokeWidth="5" /><path d="M2 26Q2 19 8 19Q12 24 2 26Z" fill="currentColor" stroke="none" /><path d="M10 19L13 16" /></Icon>線<Caret $dim /></StyleItem>
          <StyleItem><Icon w={28} h={28}><path d="M9 25H24V9" strokeWidth="4" /><rect x="3" y="3" width="17" height="18" fill="#fff" /></Icon>影<Caret $dim /></StyleItem>
        </StyleList>
      </GroupBody>
      <GroupFooter><span /><span>スタイル</span><Launcher $hover aria-label="スタイルの詳細">{diag}</Launcher></GroupFooter>
    </Group>

    <Group $width={628}>
      <GroupBody $pad={40}>
        <EditGrid>
          <EditItem><Icon w={34} h={34}><path d="M2 3H32M17 9V19M13 13L17 9L21 13" /><rect x="2" y="23" width="30" height="9" /></Icon>位置<Caret $dim /></EditItem>
          <EditItem><Icon w={36} h={36}><rect x="5" y="5" width="26" height="26" /><g fill="#fff" strokeWidth="2"><circle cx="5" cy="5" r="3" /><circle cx="31" cy="5" r="3" /><circle cx="5" cy="31" r="3" /><circle cx="31" cy="31" r="3" /></g><rect x="12" y="12" width="8" height="9" fill="currentColor" strokeWidth="2" /><path d="M24 16V25H16" /></Icon>グループ化<Caret $dim /></EditItem>
          <EditItem><Icon w={34} h={34}><path d="M4 1V33" /><rect x="10" y="9" width="12" height="5" fill="currentColor" /><rect x="10" y="21" width="19" height="5" fill="currentColor" /></Icon>配置<Caret $dim /></EditItem>
          <EditItem><Icon w={36} h={36} sw={2}><rect x="4" y="14" width="19" height="18" strokeWidth="4" /><path d="M4 2V8M24 2V8M4 5H24M28 13H34M28 33H34M31 13V33" /></Icon>サイズ<Caret $dim /></EditItem>
        </EditGrid>
      </GroupBody>
      <GroupFooter><span /><span>編集</span></GroupFooter>
    </Group>
  </Ribbon>
);

const SideRail = () => (
  <Rail aria-label="サイドバー">
    <RailInner>
      <CollapseButton aria-label="折りたたむ"><ChevronsLeft size={44} strokeWidth={2} /></CollapseButton>
      {railItems.map(i => (
        <RailItem key={i.label} $active={i.active}>
          <RailIcon $active={i.active}>
            {i.big ? <Icon w={36} h={36}>{i.icon}</Icon> : <Icon sw={4}>{i.icon}</Icon>}
          </RailIcon>
          {i.label}
        </RailItem>
      ))}
    </RailInner>
  </Rail>
);

const SymbolPanel = () => (
  <Panel>
    <PanelTop>
      <PanelRow>
        <Heading>図形</Heading>
        <PanelLink $blue>
          <Icon w={30} h={28} sw={2}><path d="M12 5Q14 15 23 17Q14 19 12 27Q10 19 1 17Q10 15 12 5Z" /><path d="M25 0Q26 4 30 5Q26 6 25 10Q24 6 20 5Q24 4 25 0Z" fill="currentColor" stroke="none" /></Icon>
          AI記号
        </PanelLink>
      </PanelRow>
      <SearchBox>
        <Search size={28} strokeWidth={3} />
        <SearchInput aria-label="シンボルを検索" placeholder="シンボルを検索" />
      </SearchBox>
      <PanelRow>
        <PanelLink><Icon w={15} h={18} sw={2}><path d="M1 8L7 2L14 8M1 16L7 10L14 16" /></Icon>すべて折りたたむ</PanelLink>
        <PanelLink>
          <Icon w={28} h={28} sw={2}><path d="M11 3Q14 0 17 3Q19 5 22 5Q26 6 25 10Q24 13 26 14Q27 17 25 19Q25 23 21 23Q18 23 17 25Q14 28 11 25Q10 23 7 23Q3 23 3 19Q1 17 2 14Q4 13 3 10Q2 6 6 5Q9 5 11 3Z" /><circle cx="14" cy="14" r="5" /></Icon>
          管理
        </PanelLink>
      </PanelRow>
    </PanelTop>
    <Scroller>
      <Library>
        {sections.map((s, i) => (
          <SectionButton key={s}><Marker><Caret $dir={i === sections.length - 1 ? 'down' : 'right'} /></Marker>{s}</SectionButton>
        ))}
        <Tiles>
          {tiles.map((t, i) => (
            <Tile key={i} aria-label={t.name}>
              <svg width="80" height="80" fill="none" stroke="#4c4c50" strokeWidth="1.4" strokeLinejoin="round">{t.art}</svg>
              {t.gem && <Gem />}
            </Tile>
          ))}
        </Tiles>
      </Library>
      <Track><Thumb $w="12px" $h={318} /></Track>
    </Scroller>
    <PanelFooter><MoreButton>もっと見る</MoreButton></PanelFooter>
  </Panel>
);

const xs = Array.from({ length: 15 }, (_, i) => i * 10);
const ys = Array.from({ length: 10 }, (_, i) => 120 + i * 10);

export default function App() {
  return (
    <Shell>
      <GlobalStyle />
      <Header />
      <RibbonBar />
      <Main>
        <SideRail />
        <SymbolPanel />
        <Workspace>
          <RulerTop><Corner /><LeadCell />{xs.map(n => <CellX key={n}>{n}</CellX>)}</RulerTop>
          <Body>
            <RulerLeft><CellsY>{ys.map(n => <CellY key={n}><span>{n}</span></CellY>)}</CellsY></RulerLeft>
            <Canvas>
              <Page><FloorPlan /></Page>
              <Assist>
                <button aria-label="AI デザイン">
                  <Icon w={38} h={38} color="#6a55f0">
                    <path d="M4 8Q3 13 6 16L22 33Q25 36 28 33T30 27L15 8Q11 4 7 5Q4 6 4 8ZM7 15Q13 15 14 8M13 16L24 29" strokeWidth="3" />
                    <path d="M19 0L20 3L23 5L20 6L19 10L17 6L15 5L17 3Z" fill="#6a55f0" stroke="none" />
                    <path d="M30 6L32 10L37 12L32 14L30 18L28 14L24 12L28 10Z" fill="#4a72f8" stroke="none" />
                    <path d="M4 20L5 24L9 25L5 27L4 31L2 27L0 25L2 24Z" fill="#6a55f0" stroke="none" />
                  </Icon>
                </button>
                <AssistRule />
                <button aria-label="AI アシスタント">
                  <Icon w={38} h={38}>
                    <path d="M17 5Q20 18 33 21Q20 24 17 37Q14 24 1 21Q14 18 17 5Z" fill="#5a48f8" stroke="none" />
                    <path d="M31 0Q32 6 37 7Q32 8 31 14Q30 8 25 7Q30 6 31 0Z" fill="#4a74f8" stroke="none" />
                  </Icon>
                </button>
              </Assist>
            </Canvas>
            <TrackY><Thumb $w="12px" $h={335} $x={4} $y={566} /></TrackY>
          </Body>
          <TrackX><Thumb $w="672px" $h={20} $x={207} $y={4} /></TrackX>
          <Palette>
            <PaletteFill aria-label="塗りつぶしの色"><Bucket size={26} /><Caret /></PaletteFill>
            <Colors>{paletteColors.map((c, i) => <Color key={i} $c={`#${c}`} aria-label={`#${c}`} />)}</Colors>
          </Palette>
        </Workspace>
      </Main>
    </Shell>
  );
}
